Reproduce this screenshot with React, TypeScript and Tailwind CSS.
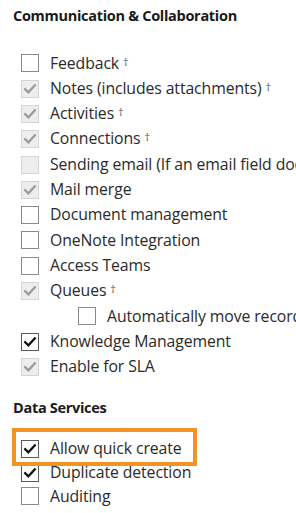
import React from "react";

type State = "off" | "on" | "dis-on" | "dis-off";

function Box({ state }: { state: State }) {
  const base = "w-[18px] h-[18px] shrink-0 border flex items-center justify-center";
  let cls = base;
  if (state === "off") cls += " bg-white border-[#8a8a8a]";
  else if (state === "on") cls += " bg-white border-[#5a5a5a]";
  else cls += " bg-[#ededed] border-[#d4d4d4]";
  const check = state === "on" ? "#111" : "#9a9a9a";
  return (
    <div className={cls}>
      {(state === "on" || state === "dis-on") && (
        <svg width="14" height="14" viewBox="0 0 14 14">
          <path d="M2.2 7.2 L5.4 10.4 L11.8 3.4" fill="none" stroke={check} strokeWidth="2.3" strokeLinecap="square" />
        </svg>
      )}
    </div>
  );
}

function Row({ label, state, dagger, indent, h = "h-[25.3px]" }: { label: string; state: State; dagger?: boolean; indent?: boolean; h?: string }) {
  return (
    <div className={`flex items-center overflow-hidden ${h} ${indent ? "pl-[78px]" : "pl-[21px]"}`}>
      <Box state={state} />
      <span className="ml-[11px] whitespace-nowrap text-[15.8px] text-[#2a2a2a] tracking-[-0.1px]">
        {label}
        {dagger && <span className="ml-[4px] text-[11px] text-[#555] relative top-[-3px]">†</span>}
      </span>
    </div>
  );
}

export default function App() {
  return (
    <div className="w-[296px] h-[513px] bg-white overflow-hidden" style={{ fontFamily: '"Open Sans", "Noto Sans", sans-serif' }}>
      <div className="pt-[5px] pl-[13px] text-[14.5px] font-bold text-[#1a1a1a] tracking-[-0.3px]">Communication &amp; Collaboration</div>
      <div className="mt-[24px]">
        <Row label="Feedback" state="off" dagger />
        <Row label="Notes (includes attachments)" state="dis-on" dagger />
        <Row label="Activities" state="dis-on" dagger />
        <Row label="Connections" state="dis-on" dagger />
        <Row label="Sending email (If an email field does not exist, one will be created)" state="dis-off" />
        <Row label="Mail merge" state="dis-on" />
        <Row label="Document management" state="off" />
        <Row label="OneNote Integration" state="off" />
        <Row label="Access Teams" state="off" />
        <Row label="Queues" state="dis-on" dagger />
        <Row label="Automatically move records to the owner's default queue" state="off" indent />
        <Row label="Knowledge Management" state="on" />
        <Row label="Enable for SLA" state="dis-on" />
      </div>
      <div className="mt-[17px] pl-[13px] text-[14.5px] font-bold text-[#1a1a1a] tracking-[-0.3px]">Data Services</div>
      <div className="mt-[19px]">
        <div className="relative">
          <div className="absolute left-[12px] top-[-9px] w-[185px] h-[38px] border-[4px] border-[#f39324]" />
          <Row label="Allow quick create" state="on" h="h-[23.5px]" />
        </div>
        <Row label="Duplicate detection" state="on" h="h-[23.5px]" />
        <Row label="Auditing" state="off" h="h-[24px]" />
      </div>
    </div>
  );
}
